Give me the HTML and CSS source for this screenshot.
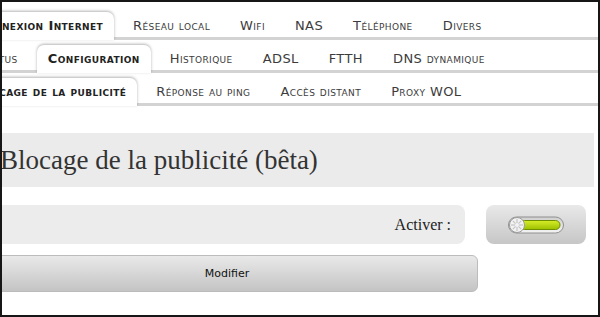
FILE: index.html
```html
<!DOCTYPE html>
<html lang="fr">
<head>
    <meta charset="UTF-8">
    <title>Blocage de la publicité</title>
    <link rel="stylesheet" href="styles.css">
</head>
<body>
    <div class="screen">
        <nav class="tabs level1">
            <a class="tab active">Connexion Internet</a>
            <a class="tab">Réseau local</a>
            <a class="tab">Wifi</a>
            <a class="tab">NAS</a>
            <a class="tab">Téléphone</a>
            <a class="tab">Divers</a>
        </nav>
        <nav class="tabs level2">
            <a class="tab">Status</a>
            <a class="tab active">Configuration</a>
            <a class="tab">Historique</a>
            <a class="tab">ADSL</a>
            <a class="tab">FTTH</a>
            <a class="tab">DNS dynamique</a>
        </nav>
        <nav class="tabs level3">
            <a class="tab active">Blocage de la publicité</a>
            <a class="tab">Réponse au ping</a>
            <a class="tab">Accès distant</a>
            <a class="tab">Proxy WOL</a>
        </nav>

        <div class="content">
            <h1 class="title">Blocage de la publicité (bêta)</h1>
            <div class="field">
                <div class="field-label">Activer :</div>
                <div class="field-value">
                    <svg class="switch" width="56" height="18" viewBox="0 0 56 18">
                        <defs>
                            <linearGradient id="track" x1="0" y1="0" x2="0" y2="1">
                                <stop offset="0" stop-color="#cfcfcf"/>
                                <stop offset="1" stop-color="#f4f4f4"/>
                            </linearGradient>
                            <linearGradient id="green" x1="0" y1="0" x2="0" y2="1">
                                <stop offset="0" stop-color="#d8ee2a"/>
                                <stop offset="1" stop-color="#9cc000"/>
                            </linearGradient>
                        </defs>
                        <rect x="0.5" y="1" width="55" height="16" rx="8" fill="url(#track)" stroke="#8f8f8f"/>
                        <rect x="12" y="4.5" width="40" height="9" rx="4.5" fill="url(#green)" stroke="#6f8d00"/>
                        <circle cx="9" cy="9" r="7.5" fill="#f3f3f3" stroke="#9a9a9a"/>
                        <g stroke="#c4c4c4" stroke-width="1.2">
                            <line x1="9" y1="3" x2="9" y2="15"/>
                            <line x1="3" y1="9" x2="15" y2="9"/>
                            <line x1="4.8" y1="4.8" x2="13.2" y2="13.2"/>
                            <line x1="13.2" y1="4.8" x2="4.8" y2="13.2"/>
                        </g>
                        <circle cx="9" cy="9" r="2" fill="#f3f3f3"/>
                    </svg>
                </div>
            </div>
            <button class="submit">Modifier</button>
        </div>
    </div>
</body>
</html>
```

FILE: styles.css
```css
html, body {
    margin: 0;
    padding: 0;
    background: #fff;
}

.screen {
    width: 600px;
    height: 317px;
    box-sizing: border-box;
    border: 2px solid #161616;
    overflow: hidden;
    background: #fff;
}

.tabs {
    display: flex;
    align-items: flex-end;
    gap: 8px;
    height: 30px;
    border-bottom: 3px solid #d3d3d3;
    font-family: "DejaVu Sans", Verdana, sans-serif;
    font-size: 13px;
    letter-spacing: 0.4px;
    font-variant: small-caps;
    color: #3c3c3c;
    white-space: nowrap;
}

.tabs.level1 {
    height: 35px;
    margin-left: -37px;
}

.tabs.level2 {
    margin-left: -34px;
}

.tabs.level3 {
    margin-left: -38px;
}

.tab {
    display: block;
    height: 25px;
    line-height: 27px;
    padding: 0 11px;
}

.tab.active {
    position: relative;
    z-index: 1;
    height: 28px;
    margin-bottom: -3px;
    background: #fff;
    border-radius: 7px 7px 0 0;
    box-shadow: 0 -1px 3px rgba(0, 0, 0, 0.3);
    font-weight: bold;
    color: #222;
}

.content {
    margin-left: -26px;
    padding-top: 27px;
}

.title {
    width: 618px;
    height: 54px;
    box-sizing: border-box;
    margin: 0 0 18px;
    padding-left: 24px;
    background: #ebebeb;
    font-family: "Liberation Serif", "Times New Roman", serif;
    font-size: 27px;
    font-weight: normal;
    line-height: 54px;
    color: #333;
}

.field {
    display: flex;
    gap: 21px;
    margin-bottom: 11px;
}

.field-label {
    width: 489px;
    height: 39px;
    box-sizing: border-box;
    padding-right: 14px;
    background: #ececec;
    border-radius: 8px;
    font-family: "Liberation Serif", "Times New Roman", serif;
    font-size: 16px;
    line-height: 40px;
    text-align: right;
    color: #222;
}

.field-value {
    width: 100px;
    height: 39px;
    display: flex;
    align-items: center;
    justify-content: center;
    border-radius: 8px;
    background: linear-gradient(#e9e9e9, #c6c6c6);
}

.switch {
    display: block;
}

.submit {
    display: block;
    width: 502px;
    height: 37px;
    border: 1px solid #bcbcbc;
    border-radius: 6px;
    background: linear-gradient(#e9e9e9, #c4c4c4);
    font-family: "DejaVu Sans", "Lucida Grande", sans-serif;
    font-size: 11px;
    color: #111;
    cursor: pointer;
}
```
